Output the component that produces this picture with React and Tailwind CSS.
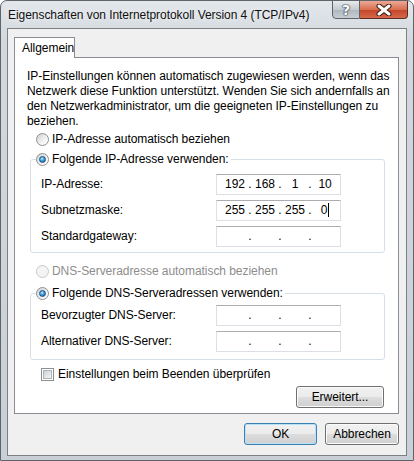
import React, { Fragment } from "react";

const Radio = ({ checked = false, disabled = false }) => (
  <span
    className={`flex h-[13px] w-[13px] shrink-0 items-center justify-center rounded-full border ${
      disabled
        ? "border-[#c9c9c9] bg-[#f4f4f4]"
        : "border-[#8e8f8f] bg-[linear-gradient(135deg,#cfcfcf,#f4f4f4_60%,#ffffff)]"
    }`}
  >
    {checked && (
      <span className="h-[7px] w-[7px] rounded-full border border-[#1b4f86] bg-[radial-gradient(circle_at_40%_35%,#c6ecff,#3aa0e0_45%,#14508f)]" />
    )}
  </span>
);

const Checkbox = () => (
  <span className="flex h-[13px] w-[13px] shrink-0 items-center justify-center border border-[#8e8f8f] bg-white">
    <span className="h-[9px] w-[9px] border border-[#aeb3b9] bg-[linear-gradient(135deg,#cbcfd5,#f6f6f6)]" />
  </span>
);

const IpField = ({ parts = ["", "", "", ""], caret = false }) => (
  <div className="flex h-[21px] w-[125px] items-center border border-[#dbdfe6] border-t-[#abadb3] bg-white pl-[5px] text-black">
    {parts.map((p, i) => (
      <Fragment key={i}>
        <span className="flex w-[26px] justify-center">
          {p}
          {caret && i === 3 && <span className="ml-[1px] h-[14px] w-[1px] bg-black" />}
        </span>
        {i < 3 && <span className="flex w-[4px] justify-center">.</span>}
      </Fragment>
    ))}
  </div>
);

const Button = ({ children, primary = false, className = "" }) => (
  <div
    className={`flex h-[22px] items-center justify-center rounded-[3px] border bg-[linear-gradient(#f2f2f2,#ebebeb_50%,#dddddd_51%,#cfcfcf)] ${
      primary
        ? "border-[#3c7fb1] shadow-[inset_0_0_0_1px_#b9e2f8]"
        : "border-[#707070] shadow-[inset_0_0_0_1px_#fbfbfb]"
    } ${className}`}
  >
    {children}
  </div>
);

const FieldRow = ({ label, children }) => (
  <div className="flex h-[21px] items-center">
    <span className="w-[175px]">{label}</span>
    {children}
  </div>
);

export default function App() {
  return (
    <div className="h-[461px] w-[414px] overflow-hidden rounded-t-[7px] border border-[#5f6469] bg-[linear-gradient(#e3e7eb,#d2d8de_40px,#c9cfd6)] font-['Liberation_Sans',sans-serif] text-[12px] leading-[15px] tracking-[-0.05px] text-black">
      {/* title bar */}
      <div className="flex h-[27px]">
        <span className="ml-[7px] mt-[7px] text-[12px] text-[#111] [text-shadow:0_0_6px_#ffffff]">
          Eigenschaften von Internetprotokoll Version 4 (TCP/IPv4)
        </span>
        <div className="ml-auto mr-[5px] flex h-[19px] -mt-px">
          <div className="flex w-[28px] items-center justify-center rounded-bl-[4px] border border-[#5d6268] bg-[linear-gradient(#e8ebee,#c5cbd2_50%,#aeb5bd_51%,#c7cdd3)]">
            <span className="font-['DejaVu_Sans',sans-serif] text-[14px] font-bold leading-none text-white [text-shadow:0_0_1px_#2c3a48,0_0_1px_#2c3a48,0_0_2px_#2c3a48]">
              ?
            </span>
          </div>
          <div className="flex w-[48px] items-center justify-center rounded-br-[4px] border border-l-0 border-[#5d2a24] bg-[linear-gradient(#eaa898,#d8704f_50%,#c44427_51%,#d4694b)]">
            <svg width="16" height="12" viewBox="0 0 16 12">
              <path d="M3 2 L13 10 M13 2 L3 10" stroke="#3b1a14" strokeWidth="5" strokeLinecap="round" />
              <path d="M3 2 L13 10 M13 2 L3 10" stroke="#ffffff" strokeWidth="3" strokeLinecap="round" />
            </svg>
          </div>
        </div>
      </div>

      {/* client area */}
      <div className="mx-[6px] flex h-[428px] flex-col border border-[#7b8085] bg-[#f0f0f0] pl-[6px] pr-[7px]">
        {/* tab strip */}
        <div className="mt-[8px] flex">
          <div className="relative z-10 -mb-px flex h-[21px] w-[61px] items-center border border-b-0 border-[#898c95] bg-white pl-[7px]">
            Allgemein
          </div>
        </div>

        {/* tab page */}
        <div className="flex h-[357px] flex-col border border-[#898c95] bg-white">
          <p className="ml-[12px] mt-[11px]">
            IP-Einstellungen können automatisch zugewiesen werden, wenn das
            <br />
            Netzwerk diese Funktion unterstützt. Wenden Sie sich andernfalls an
            <br />
            den Netzwerkadministrator, um die geeigneten IP-Einstellungen zu
            <br />
            beziehen.
          </p>

          <div className="ml-[21px] flex h-[20px] items-center gap-[3px]">
            <Radio />
            <span>IP-Adresse automatisch beziehen</span>
          </div>

          <fieldset className="ml-[15px] w-[355px] rounded-[3px] border border-[#d5dfe5] pb-[5px]">
            <legend className="ml-[5px] flex h-[20px] items-center gap-[3px] pr-[2px]">
              <Radio checked />
              <span>Folgende IP-Adresse verwenden:</span>
            </legend>
            <div className="mt-[5px] flex flex-col gap-[5px] pl-[10px]">
              <FieldRow label="IP-Adresse:">
                <IpField parts={["192", "168", "1", "10"]} />
              </FieldRow>
              <FieldRow label="Subnetzmaske:">
                <IpField parts={["255", "255", "255", "0"]} caret />
              </FieldRow>
              <FieldRow label="Standardgateway:">
                <IpField />
              </FieldRow>
            </div>
          </fieldset>

          <div className="ml-[21px] mt-[8px] flex h-[20px] items-center gap-[3px] text-[#8d8d8d]">
            <Radio disabled />
            <span>DNS-Serveradresse automatisch beziehen</span>
          </div>

          <fieldset className="ml-[15px] mt-[2px] w-[355px] rounded-[3px] border border-[#d5dfe5] pb-[7px]">
            <legend className="ml-[5px] flex h-[20px] items-center gap-[3px] pr-[2px]">
              <Radio checked />
              <span>Folgende DNS-Serveradressen verwenden:</span>
            </legend>
            <div className="mt-[2px] flex flex-col gap-[5px] pl-[10px]">
              <FieldRow label="Bevorzugter DNS-Server:">
                <IpField />
              </FieldRow>
              <FieldRow label="Alternativer DNS-Server:">
                <IpField />
              </FieldRow>
            </div>
          </fieldset>

          <div className="ml-[26px] mt-[4px] flex h-[20px] items-center gap-[4px]">
            <Checkbox />
            <span>Einstellungen beim Beenden überprüfen</span>
          </div>

          <div className="mr-[14px] mt-[2px] flex justify-end">
            <Button className="w-[88px]">Erweitert...</Button>
          </div>
        </div>

        {/* dialog buttons */}
        <div className="mt-[9px] flex justify-end gap-[8px]">
          <Button primary className="w-[73px]">OK</Button>
          <Button className="w-[74px]">Abbrechen</Button>
        </div>
      </div>
    </div>
  );
}
